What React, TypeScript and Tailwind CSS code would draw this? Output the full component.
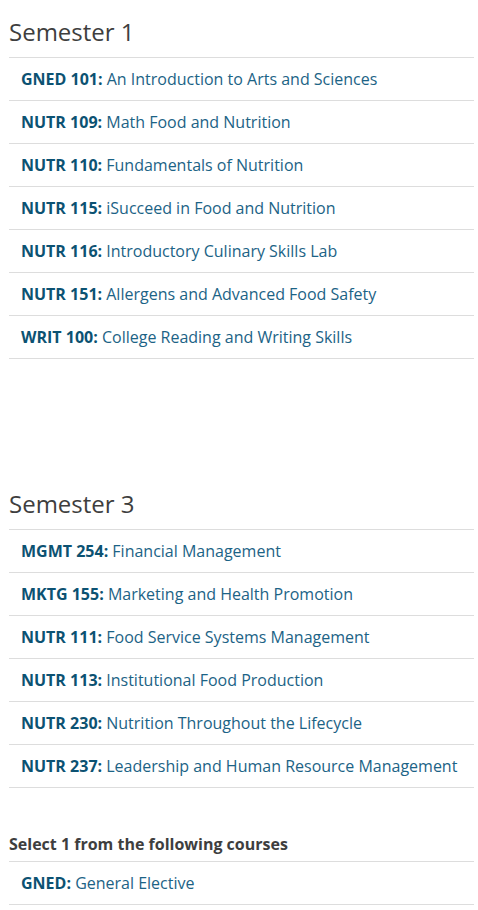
const semester1 = [
  ['GNED 101', 'An Introduction to Arts and Sciences'],
  ['NUTR 109', 'Math Food and Nutrition'],
  ['NUTR 110', 'Fundamentals of Nutrition'],
  ['NUTR 115', 'iSucceed in Food and Nutrition'],
  ['NUTR 116', 'Introductory Culinary Skills Lab'],
  ['NUTR 151', 'Allergens and Advanced Food Safety'],
  ['WRIT 100', 'College Reading and Writing Skills'],
];

const semester3 = [
  ['MGMT 254', 'Financial Management'],
  ['MKTG 155', 'Marketing and Health Promotion'],
  ['NUTR 111', 'Food Service Systems Management'],
  ['NUTR 113', 'Institutional Food Production'],
  ['NUTR 230', 'Nutrition Throughout the Lifecycle'],
  ['NUTR 237', 'Leadership and Human Resource Management'],
];

function CourseList({ courses }: { courses: string[][] }) {
  return (
    <ul className="border-t border-[#dddddd]">
      {courses.map(([code, title]) => (
        <li key={code} className="border-b border-[#dddddd] px-3 py-[9px] text-[16px] leading-6">
          <a className="text-[#1c6386]">
            <strong className="font-bold text-[#0c5272]">{code}:</strong> {title}
          </a>
        </li>
      ))}
    </ul>
  );
}

export default function App() {
  return (
    <div
      className="min-h-screen bg-white pl-[9px] pr-[4px]"
      style={{ fontFamily: '"Open Sans", sans-serif' }}
    >
      {/* Semester 1 */}
      <section className="pt-[17px]">
        <h2 className="pb-[10px] text-[24px] leading-[30px] font-normal text-[#3e3e3e]">Semester 1</h2>
        <CourseList courses={semester1} />
      </section>

      {/* Semester 3 */}
      <section className="mt-[113px] pt-[17px]">
        <h2 className="pb-[10px] text-[24px] leading-[30px] font-normal text-[#3e3e3e]">Semester 3</h2>
        <CourseList courses={semester3} />

        <h3 className="mt-[44px] pb-[5px] text-[16px] leading-6 font-bold text-[#3e3e3e]">
          Select 1 from the following courses
        </h3>
        <CourseList courses={[['GNED', 'General Elective']]} />
      </section>
    </div>
  );
}
